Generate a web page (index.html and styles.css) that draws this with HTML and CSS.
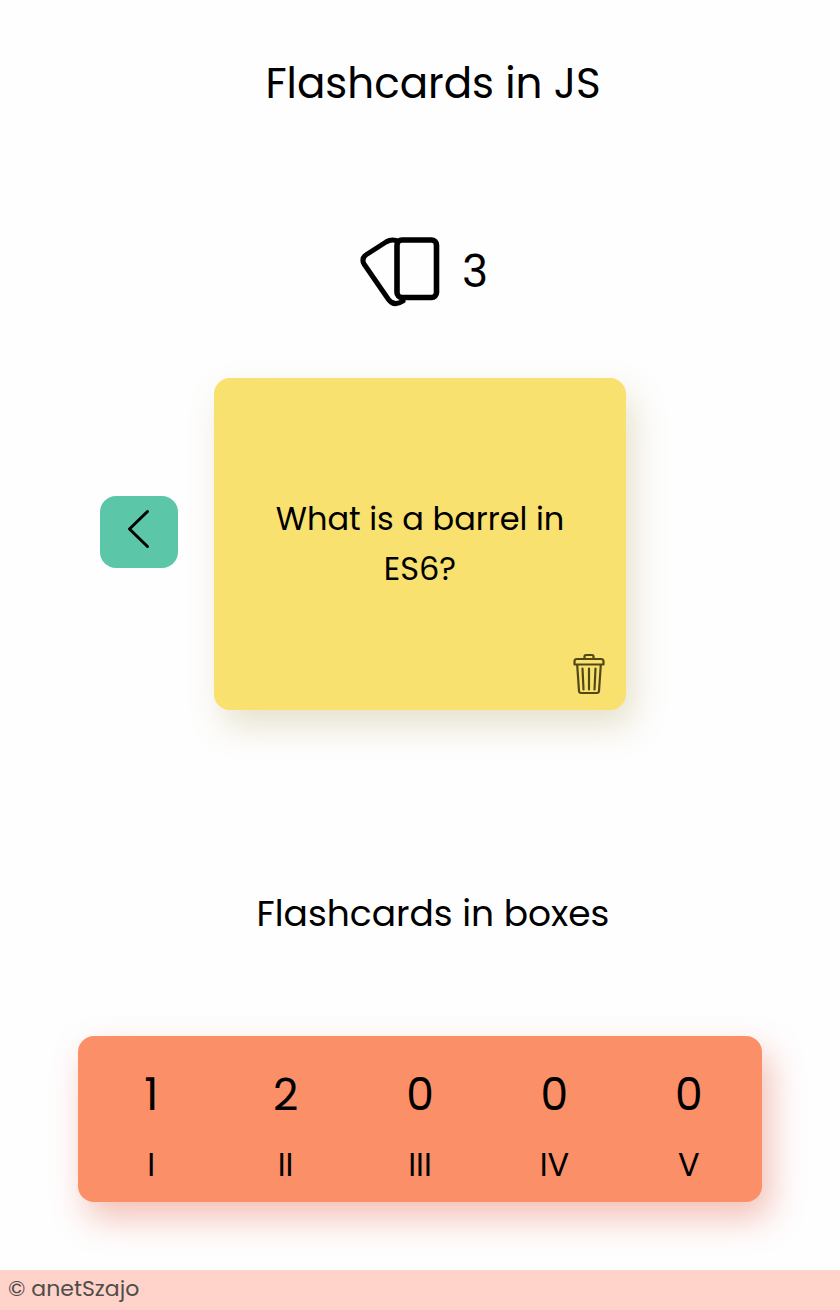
FILE: index.html
```html
<!DOCTYPE html>
<html lang="en">
<head>
<meta charset="utf-8">
<title>Flashcards in JS</title>
<link rel="stylesheet" href="styles.css">
</head>
<body>
<h1 class="title">Flashcards in JS</h1>
<div class="counter">
  <svg class="deck" viewBox="0 0 80 70" fill="none" stroke="#000" stroke-linejoin="round" stroke-linecap="round">
    <path stroke-width="5" d="M36 3.500Q31 2 26 5L6.500 17.500Q1 21 4 27L28.500 62.500Q34 70 43 64"/>
    <rect x="37" y="3" width="39.500" height="57.500" rx="5" stroke-width="5.600"/>
  </svg>
  <span class="count">3</span>
</div>
<main class="stage">
  <button class="back" aria-label="Previous">
    <svg width="24" height="40" viewBox="0 0 24 40" fill="none" stroke="#000" stroke-width="3" stroke-linecap="round" stroke-linejoin="round"><path d="M20.500 2.500L2.500 20L20.500 37.500"/></svg>
  </button>
  <section class="card">
    <p class="question">What is a barrel in<br>ES6?</p>
    <svg class="trash" viewBox="0 0 32 42" fill="none" stroke="#524817" stroke-width="2.200" stroke-linecap="round" stroke-linejoin="round">
      <path d="M11.500 6V3.500Q11.500 2 13 2H19Q20.500 2 20.500 3.500V6M4 6H28Q30.500 6 30.500 8.500V11.500H1.500V8.500Q1.500 6 4 6ZM4.200 12L6 38Q6.200 40 8 40H24Q25.800 40 26 38L27.800 12M9.500 15.500L10.500 36.500M16 15.500V36.500M22.500 15.500L21.500 36.500"/>
    </svg>
  </section>
</main>
<h2 class="subtitle">Flashcards in boxes</h2>
<section class="boxes">
  <div class="box"><span class="num">1</span><span class="roman">I</span></div>
  <div class="box"><span class="num">2</span><span class="roman">II</span></div>
  <div class="box"><span class="num">0</span><span class="roman">III</span></div>
  <div class="box"><span class="num">0</span><span class="roman">IV</span></div>
  <div class="box"><span class="num">0</span><span class="roman">V</span></div>
</section>
<footer class="footer">© anetSzajo</footer>
</body>
</html>
```
FILE: styles.css
```css
* { box-sizing: border-box; }
body {
  margin: 0;
  height: 1310px;
  display: flex;
  flex-direction: column;
  background: #fefefe;
  color: #000;
  font-family: Poppins, Inter, sans-serif;
}
h1, h2, p { margin: 0; font-weight: 400; }
.title {
  margin-top: 54px;
  padding-left: 26px;
  font-size: 42px;
  line-height: 60px;
  text-align: center;
}
.counter {
  display: flex;
  align-items: center;
  gap: 22px;
  height: 70px;
  margin: 123px 0 0 360px;
}
.deck { width: 80px; height: 70px; }
.count { font-size: 44px; line-height: 70px; }
.stage {
  display: flex;
  gap: 36px;
  margin: 71px 0 0 100px;
}
.back {
  display: flex;
  align-items: flex-start;
  width: 78px;
  height: 72px;
  margin-top: 118px;
  padding: 13px 0 0 27px;
  border: 0;
  border-radius: 16px;
  background: #5bc6a8;
}
.card {
  display: flex;
  flex-direction: column;
  width: 412px;
  height: 332px;
  padding-top: 116px;
  border-radius: 16px;
  background: #f8e16f;
  box-shadow: 8px 16px 34px rgba(150, 128, 40, 0.23);
}
.question {
  font-size: 32px;
  line-height: 50px;
  text-align: center;
}
.trash {
  width: 32px;
  height: 42px;
  margin: 59px 21px 0 auto;
}
.subtitle {
  margin-top: 174px;
  padding-left: 26px;
  font-size: 36px;
  line-height: 60px;
  text-align: center;
}
.boxes {
  display: grid;
  grid-template-columns: repeat(5, 1fr);
  height: 166px;
  margin: 92px 78px 0;
  padding: 27px 6px 0;
  border-radius: 16px;
  background: #fb8f67;
  box-shadow: 8px 16px 34px rgba(224, 70, 40, 0.34);
}
.box { display: flex; flex-direction: column; align-items: center; }
.num { font-size: 44px; line-height: 64px; }
.roman { margin-top: 13px; font-size: 32px; line-height: 50px; }
.footer {
  height: 40px;
  margin-top: auto;
  padding-left: 8px;
  background: #ffd3ca;
  color: #4f4d4b;
  font-size: 22px;
  line-height: 38px;
}
```
